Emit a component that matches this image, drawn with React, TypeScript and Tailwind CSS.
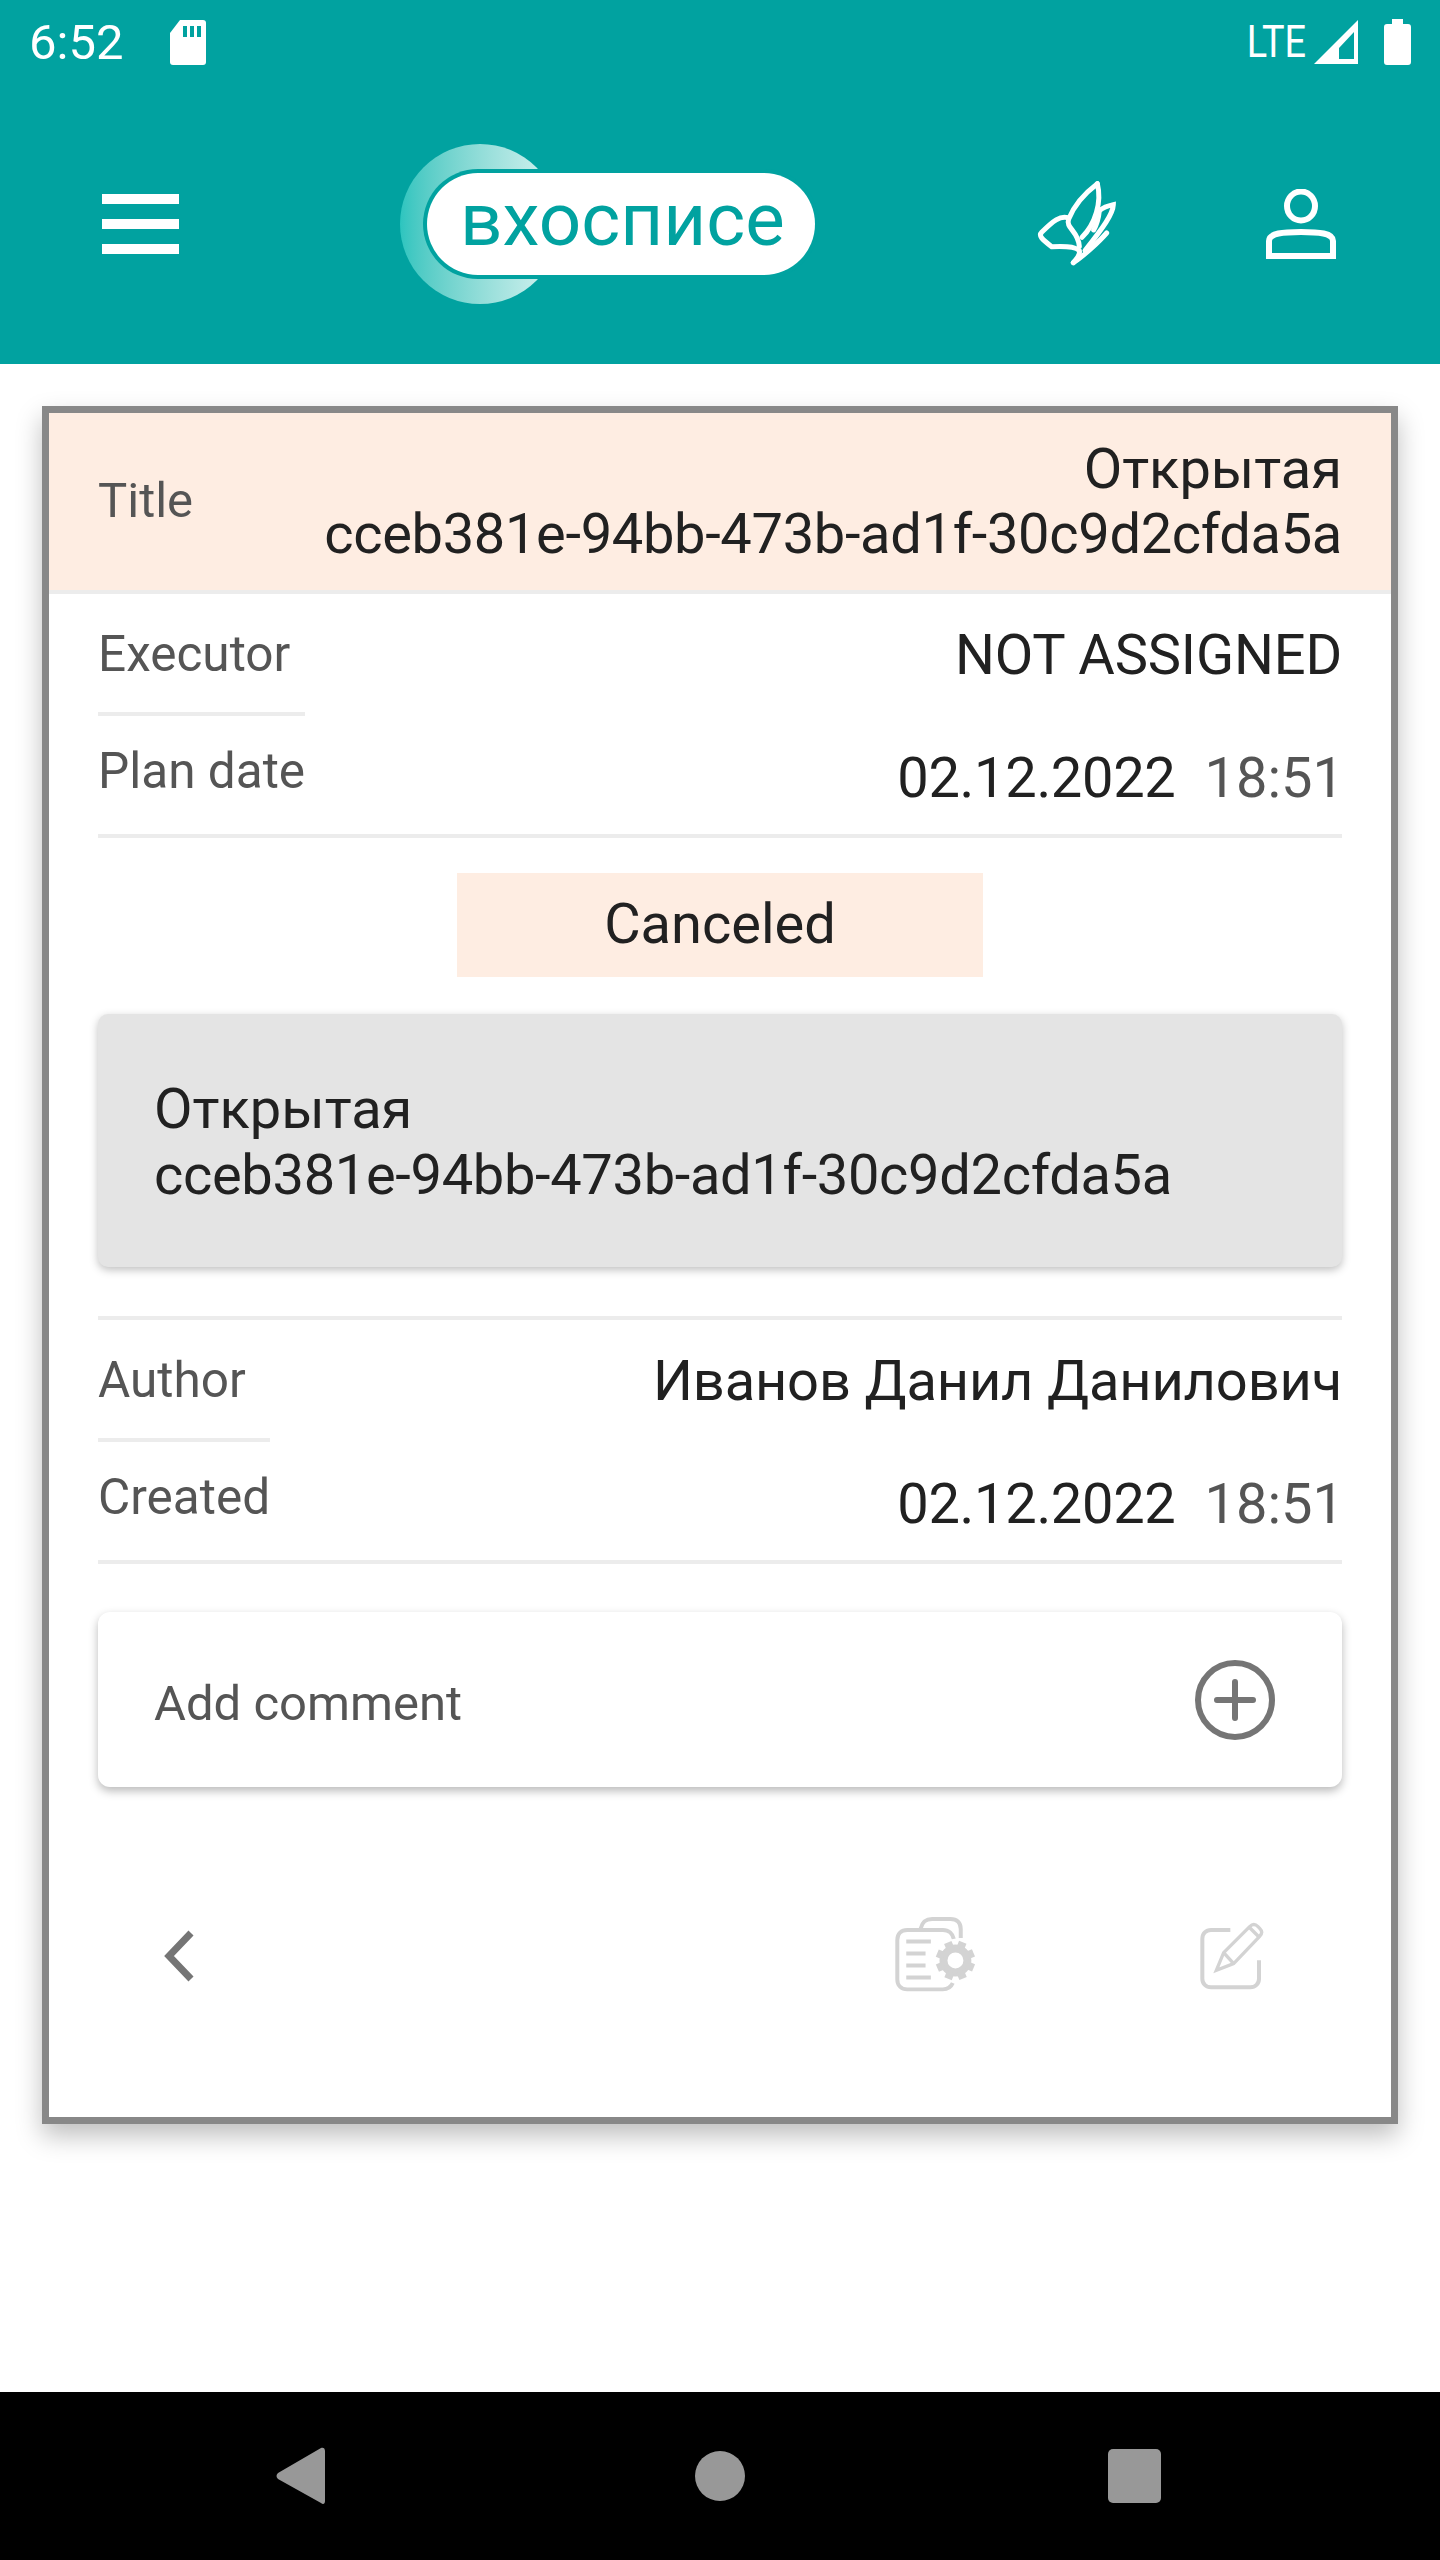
const roboto = "font-['Roboto',sans-serif]";

function SdCard() {
  return (
    <svg width="36" height="45" viewBox="0 0 36 45" fill="white">
      <path d="M14 0H33a3 3 0 0 1 3 3V42a3 3 0 0 1-3 3H3a3 3 0 0 1-3-3V13L10 0Z" />
      <rect x="13" y="6" width="4" height="11" fill="#01a2a0" />
      <rect x="20" y="6" width="4" height="11" fill="#01a2a0" />
      <rect x="27" y="6" width="4" height="11" fill="#01a2a0" />
    </svg>
  );
}

function Signal() {
  return (
    <svg width="45" height="44" viewBox="0 0 45 44" fill="white">
      <path fillRule="evenodd" d="M44 0V44H0L44 0ZM40 12L25 28V39H40V12Z" />
    </svg>
  );
}

function Battery() {
  return (
    <svg width="27" height="46" viewBox="0 0 27 46" fill="white">
      <path d="M8 0H19V5H24a3 3 0 0 1 3 3V43a3 3 0 0 1-3 3H3a3 3 0 0 1-3-3V8a3 3 0 0 1 3-3H8Z" />
    </svg>
  );
}

function Hamburger() {
  return (
    <div className="flex w-[77px] flex-col gap-[15px]">
      <div className="h-[10px] bg-white" />
      <div className="h-[10px] bg-white" />
      <div className="h-[10px] bg-white" />
    </div>
  );
}

function Logo() {
  return (
    <div className="relative flex h-[160px] w-[416px] items-center pl-[27px]">
      <div className="absolute left-0 top-0 h-[160px] w-[160px] rounded-full bg-gradient-to-r from-[#2cc5bf] to-[#d8f4f2]" />
      <div className="relative flex h-[102px] w-[388px] items-center rounded-full bg-white pb-[8px] pl-[33px] ring-4 ring-[#01a2a0]">
        <span className={`${roboto} text-[74.5px] leading-none text-[#01a2a0]`}>вхосписе</span>
      </div>
    </div>
  );
}

function Leaf() {
  return (
    <svg width="110" height="110" viewBox="0 0 330 330" fill="none" stroke="white" strokeWidth="15" strokeLinecap="round" strokeLinejoin="miter">
      <path d="M232 44C195 72 165 102 146 150C136 178 175 185 178 232" />
      <path d="M232 44C246 100 226 165 186 205" />
      <path d="M238 125C250 115 265 110 280 107C279 135 250 175 195 245" />
      <path d="M238 125C236 145 231 165 221 183" />
      <path d="M143 146C120 140 100 155 65 190C55 200 65 210 95 233C120 232 165 230 178 245C182 260 168 270 160 281" />
      <path d="M260 192C240 215 190 262 160 281" />
    </svg>
  );
}

function Person() {
  return (
    <svg width="70" height="70" viewBox="0 0 70 70" fill="none" stroke="white" strokeWidth="6">
      <ellipse cx="35" cy="17" rx="14" ry="14.5" />
      <path d="M3 67V52C3 44 17 43 35 43C53 43 67 44 67 52V67Z" />
    </svg>
  );
}

function DocGear() {
  return (
    <svg width="93" height="87" viewBox="150 105 280 260" fill="none" stroke="#d3d3d3" strokeWidth="12">
      <path d="M342 318C336 332 325 337 312 337H205C187 337 175 325 175 307V188C175 170 187 158 205 158H312C330 158 342 170 345 185" />
      <path d="M245 155C250 133 260 125 280 125H335C355 125 366 137 366 155V182" />
      <path d="M202 193H276M202 229H260M202 265H260M202 301H276" />
      <circle cx="350" cy="250" r="36" strokeWidth="24" />
      {[0, 45, 90, 135, 180, 225, 270, 315].map((a) => (
        <rect key={a} x="338" y="191" width="24" height="22" fill="#d3d3d3" stroke="none" transform={`rotate(${a + 22} 350 250)`} />
      ))}
    </svg>
  );
}

function EditIcon() {
  return (
    <svg width="68" height="68" viewBox="1070 125 204 204" fill="none" stroke="#d3d3d3" strokeWidth="12">
      <path d="M1170 149H1112C1097 149 1086 160 1086 175V295C1086 310 1097 321 1112 321H1230C1245 321 1256 310 1256 295V240" />
      <path d="M1128 270L1150 217L1228 139C1236 131 1245 131 1253 139L1258 144C1266 152 1266 160 1258 168L1180 250L1128 270Z" strokeWidth="10" />
      <path d="M1150 217L1180 250M1226 140L1256 170" strokeWidth="10" />
    </svg>
  );
}

function DateValue({ date, time }: { date: string; time: string }) {
  return (
    <div className="-mr-[2px] flex h-[118px] items-center justify-end gap-[29px] pt-[6px] text-[56px] leading-none text-[#212121]">
      <span className="tracking-[-0.3px]">{date}</span>
      <span className="text-[#555555]">{time}</span>
    </div>
  );
}

function InfoBlock({ topLabel, topValue, bottomLabel, date, time }: { topLabel: string; topValue: string; bottomLabel: string; date: string; time: string }) {
  return (
    <div className="flex justify-between border-b-4 border-[#ececec]">
      <div className="text-[49.5px] leading-none text-[#555555]">
        <div className="flex h-[122px] items-center border-b-4 border-[#ececec] pt-[4px]">{topLabel}</div>
        <div className="flex h-[118px] items-center pb-[6px]">{bottomLabel}</div>
      </div>
      <div>
        <div className="flex h-[122px] items-center justify-end tracking-[-0.15px] text-[56px] leading-none text-[#212121]">{topValue}</div>
        <DateValue date={date} time={time} />
      </div>
    </div>
  );
}

export default function App() {
  return (
    <div className={`${roboto} flex h-[2560px] w-[1440px] flex-col bg-white`}>
      <header className="h-[364px] bg-[#01a2a0] text-white">
        <div className="flex h-[84px] items-center pl-[29px] pr-[29px]">
          <span className="text-[49px] leading-none">6:52</span>
          <div className="ml-[47px]">
            <SdCard />
          </div>
          <span className="ml-auto origin-right scale-x-[0.86] text-[44px] leading-none">LTE</span>
          <div className="ml-[8px]">
            <Signal />
          </div>
          <div className="ml-[25px]">
            <Battery />
          </div>
        </div>
        <div className="flex h-[280px] items-center pl-[102px]">
          <Hamburger />
          <div className="ml-[221px]">
            <Logo />
          </div>
          <div className="ml-[204px]">
            <Leaf />
          </div>
          <div className="ml-[136px]">
            <Person />
          </div>
        </div>
      </header>

      <main className="mx-[42px] mt-[42px] flex h-[1718px] flex-col border-[7px] border-[#888888] bg-white shadow-[0_12px_24px_rgba(0,0,0,0.25)]">
        <div className="flex h-[181px] shrink-0 items-center justify-between border-b-4 border-[#ececec] bg-[#feede2] px-[49px]">
          <span className="pb-[2px] text-[49px] leading-none text-[#555555]">Title</span>
          <div className="text-right text-[56px] leading-[65px] text-[#212121]">
            Открытая
            <br />
            <span className="tracking-[-0.32px]">cceb381e-94bb-473b-ad1f-30c9d2cfda5a</span>
          </div>
        </div>

        <div className="flex flex-1 flex-col px-[49px]">
          <InfoBlock topLabel="Executor" topValue="NOT ASSIGNED" bottomLabel="Plan date" date="02.12.2022" time="18:51" />

          <div className="mx-auto mt-[35px] flex h-[104px] w-[526px] items-center justify-center bg-[#feede2] pb-[3px] text-[56px] leading-none text-[#212121]">
            Canceled
          </div>

          <div className="mt-[37px] flex h-[253px] items-center rounded-[10px] bg-[#e4e4e4] px-[56px] pt-[3px] text-[56px] leading-[66px] text-[#212121] shadow-[0_3px_8px_rgba(0,0,0,0.25)]">
            <div>
              Открытая
              <br />
              <span className="tracking-[-0.32px]">cceb381e-94bb-473b-ad1f-30c9d2cfda5a</span>
            </div>
          </div>

          <div className="mt-[49px] border-t-4 border-[#ececec]">
            <InfoBlock topLabel="Author" topValue="Иванов Данил Данилович" bottomLabel="Created" date="02.12.2022" time="18:51" />
          </div>

          <div className="mt-[48px] flex h-[175px] items-center justify-between rounded-[12px] bg-white pl-[56px] pr-[67px] pt-[7px] shadow-[0_4px_10px_rgba(0,0,0,0.28)]">
            <span className="text-[49px] leading-none text-[#555555]">Add comment</span>
            <svg width="80" height="80" viewBox="0 0 80 80" fill="none" stroke="#757575" strokeWidth="6" strokeLinecap="round" className="-mt-[7px]">
              <circle cx="40" cy="40" r="37" />
              <path d="M22 40H58M40 22V58" />
            </svg>
          </div>

          <div className="mt-[125px] flex items-center">
            <svg width="30" height="52" viewBox="0 0 30 52" fill="none" stroke="#757575" strokeWidth="7" className="ml-[66px]">
              <path d="M27 3L5 26L27 49" />
            </svg>
            <div className="ml-[695px]">
              <DocGear />
            </div>
            <div className="ml-[215px]">
              <EditIcon />
            </div>
          </div>
        </div>
      </main>

      <nav className="mt-auto flex h-[168px] items-center bg-black pl-[276px]">
        <svg width="50" height="58" viewBox="0 0 50 58" fill="#989898">
          <path d="M45 1C47 0 49 1 49 4V54C49 57 47 58 45 56L2 32C0 30 0 28 2 26Z" />
        </svg>
        <div className="ml-[369px] h-[50px] w-[50px] rounded-full bg-[#989898]" />
        <div className="ml-[363px] h-[54px] w-[53px] rounded-[5px] bg-[#989898]" />
      </nav>
    </div>
  );
}
